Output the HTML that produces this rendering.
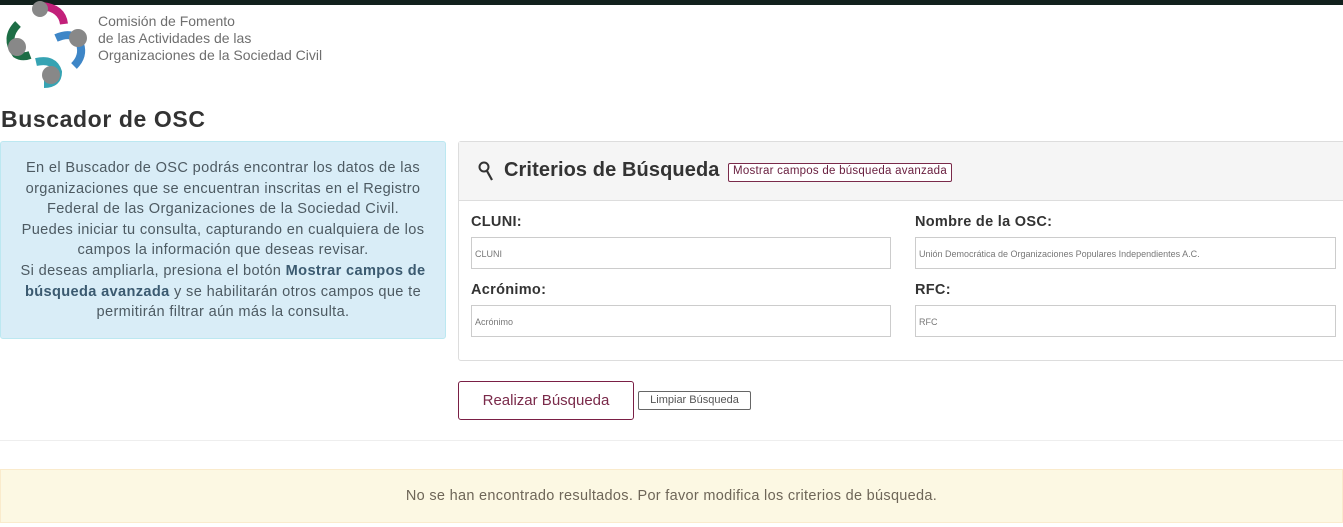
<!DOCTYPE html>
<html><head><meta charset="utf-8"><style>
*{box-sizing:border-box;margin:0;padding:0}
body{width:1343px;height:527px;overflow:hidden;background:#fff;font-family:"Liberation Sans",sans-serif;color:#333;position:relative}
.abs{position:absolute}
.top{left:0;top:0;width:1343px;height:5px;background:#12211d}
.lt{left:98px;top:13px;font-size:14px;line-height:17px;color:#6e6e6e}
h1{position:absolute;left:1px;top:106px;font-size:23px;font-weight:bold;color:#333;letter-spacing:0.6px}
.info{left:0;top:141px;width:446px;height:198px;background:#d9edf7;border:1px solid #bce8f1;border-radius:3px;color:#4d5a62;font-size:14.6px;line-height:20.6px;text-align:center;padding:16px 4px 0 4px;letter-spacing:0.35px}
.info b{color:#3b5a70}
.panel{left:458px;top:141px;width:890px;height:220px;border:1px solid #ddd;border-radius:3px}
.ph{left:0;top:0;width:100%;height:59px;background:#f5f5f5;border-bottom:1px solid #ddd}
.ph .t{position:absolute;left:45px;top:17px;font-size:20px;font-weight:bold;color:#333;letter-spacing:0.1px}
.adv{position:absolute;left:269px;top:21px;height:19px;border:1px solid #7a2a4a;border-radius:2px;font-size:11.5px;color:#6a2040;padding:1px 4px;background:#fff;letter-spacing:0.25px}
.lbl{font-size:14.5px;font-weight:bold;color:#333;letter-spacing:0.3px}
.inp{height:32px;border:1px solid #ccc;font-size:9px;color:#777;padding:11px 3px}
.btn1{left:458px;top:381px;width:176px;height:39px;border:1px solid #7a1f45;border-radius:3px;font-size:15px;color:#7a2a4a;text-align:center;line-height:37px}
.btn2{left:638px;top:391px;width:113px;height:19px;border:1px solid #666;border-radius:2px;font-size:11px;color:#555;text-align:center;line-height:17px}
.hr{left:0;top:440px;width:1343px;height:1px;background:#eee}
.warn{left:0;top:469px;width:1343px;height:54px;background:#fcf8e3;border:1px solid #faebcc;font-size:14.5px;color:#6e6658;text-align:center;line-height:52px;letter-spacing:0.3px}
</style></head><body>
<div class="abs top"></div>
<svg class="abs" style="left:0;top:0" width="95" height="92" viewBox="0 0 95 92">
<path d="M42 6 Q62 8 64 24" stroke="#c2207a" stroke-width="8" fill="none"/>
<path d="M18 24 Q4 38 16 54 Q22 58 30 55" stroke="#1d6d45" stroke-width="8" fill="none"/>
<path d="M56 38 Q74 30 80 44 Q84 56 74 66" stroke="#3e86c7" stroke-width="8" fill="none"/>
<path d="M36 62 Q54 58 58 72 Q58 84 44 84" stroke="#36a3b3" stroke-width="8" fill="none"/>
<circle cx="40" cy="9" r="8" fill="#888"/>
<circle cx="17" cy="47" r="9" fill="#888"/>
<circle cx="78" cy="38" r="9" fill="#888"/>
<circle cx="51" cy="75" r="9" fill="#888"/>
</svg>
<div class="abs lt">Comisión de Fomento<br>de las Actividades de las<br>Organizaciones de la Sociedad Civil</div>
<h1>Buscador de OSC</h1>
<div class="abs info">En el Buscador de OSC podrás encontrar los datos de las organizaciones que se encuentran inscritas en el Registro Federal de las Organizaciones de la Sociedad Civil.<br>Puedes iniciar tu consulta, capturando en cualquiera de los campos la información que deseas revisar.<br>Si deseas ampliarla, presiona el botón <b>Mostrar campos de búsqueda avanzada</b> y se habilitarán otros campos que te permitirán filtrar aún más la consulta.</div>
<div class="abs panel">
 <div class="abs ph">
  <svg style="position:absolute;left:19px;top:19px" width="16" height="22" viewBox="0 0 16 22"><circle cx="6" cy="6" r="4.5" stroke="#333" stroke-width="2" fill="none"/><path d="M9 10 L14 19" stroke="#333" stroke-width="2.2"/></svg>
  <div class="t">Criterios de Búsqueda</div>
  <div class="adv">Mostrar campos de búsqueda avanzada</div>
 </div>
</div>
<div class="abs lbl" style="left:471px;top:214px">CLUNI:</div>
<div class="abs inp" style="left:471px;top:237px;width:420px">CLUNI</div>
<div class="abs lbl" style="left:915px;top:214px">Nombre de la OSC:</div>
<div class="abs inp" style="left:915px;top:237px;width:421px">Unión Democrática de Organizaciones Populares Independientes A.C.</div>
<div class="abs lbl" style="left:471px;top:282px">Acrónimo:</div>
<div class="abs inp" style="left:471px;top:305px;width:420px">Acrónimo</div>
<div class="abs lbl" style="left:915px;top:282px">RFC:</div>
<div class="abs inp" style="left:915px;top:305px;width:421px">RFC</div>
<div class="abs btn1">Realizar Búsqueda</div>
<div class="abs btn2">Limpiar Búsqueda</div>
<div class="abs hr"></div>
<div class="abs warn">No se han encontrado resultados. Por favor modifica los criterios de búsqueda.</div>
</body></html>
